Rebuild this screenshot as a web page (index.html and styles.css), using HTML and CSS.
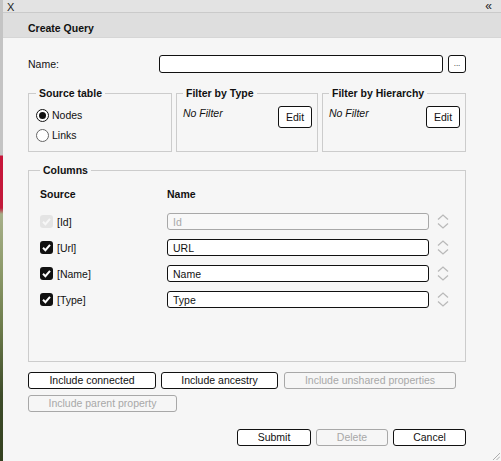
FILE: index.html
```html
<!DOCTYPE html>
<html>
<head>
<meta charset="utf-8">
<link rel="stylesheet" href="styles.css">
</head>
<body>
<div class="backdrop"></div>
<div class="panel">
  <div class="topbar"><span class="close">X</span><span class="collapse">«</span></div>
  <div class="header">Create Query</div>
  <div class="content">
    <div class="name-row">
      <label class="name-label">Name:</label>
      <input class="name-input" type="text">
      <button class="btn btn-dots">...</button>
    </div>
    <div class="filters">
      <fieldset class="box box-source">
        <legend>Source table</legend>
        <div class="radio-row"><span class="radio radio-on"></span><span>Nodes</span></div>
        <div class="radio-row"><span class="radio"></span><span>Links</span></div>
      </fieldset>
      <fieldset class="box box-filter box-type">
        <legend>Filter by Type</legend>
        <div class="filter-row"><span class="nofilter">No Filter</span><button class="btn btn-edit">Edit</button></div>
      </fieldset>
      <fieldset class="box box-filter box-hier">
        <legend>Filter by Hierarchy</legend>
        <div class="filter-row"><span class="nofilter">No Filter</span><button class="btn btn-edit">Edit</button></div>
      </fieldset>
    </div>
    <fieldset class="box box-columns">
      <legend>Columns</legend>
      <div class="col-grid">
        <div class="col-head">Source</div>
        <div class="col-head">Name</div>
        <div></div>

        <div class="src"><span class="check check-disabled"><svg viewBox="0 0 13 13" width="13" height="13"><path d="M3 6.8 L5.4 9.2 L10 3.8" fill="none" stroke="#f7f7f7" stroke-width="2"/></svg></span><span>[Id]</span></div>
        <input class="col-input col-input-disabled" type="text" value="Id" disabled>
        <span class="spin"><svg viewBox="0 0 16 17" width="16" height="17"><path d="M3 6.5 L8 2 L13 6.5 M3 10.5 L8 15 L13 10.5" fill="none" stroke="#b9b9b9" stroke-width="1.3"/></svg></span>

        <div class="src"><span class="check"><svg viewBox="0 0 13 13" width="13" height="13"><path d="M3 6.8 L5.4 9.2 L10 3.8" fill="none" stroke="#fff" stroke-width="2"/></svg></span><span>[Url]</span></div>
        <input class="col-input" type="text" value="URL">
        <span class="spin"><svg viewBox="0 0 16 17" width="16" height="17"><path d="M3 6.5 L8 2 L13 6.5 M3 10.5 L8 15 L13 10.5" fill="none" stroke="#b9b9b9" stroke-width="1.3"/></svg></span>

        <div class="src"><span class="check"><svg viewBox="0 0 13 13" width="13" height="13"><path d="M3 6.8 L5.4 9.2 L10 3.8" fill="none" stroke="#fff" stroke-width="2"/></svg></span><span>[Name]</span></div>
        <input class="col-input" type="text" value="Name">
        <span class="spin"><svg viewBox="0 0 16 17" width="16" height="17"><path d="M3 6.5 L8 2 L13 6.5 M3 10.5 L8 15 L13 10.5" fill="none" stroke="#b9b9b9" stroke-width="1.3"/></svg></span>

        <div class="src"><span class="check"><svg viewBox="0 0 13 13" width="13" height="13"><path d="M3 6.8 L5.4 9.2 L10 3.8" fill="none" stroke="#fff" stroke-width="2"/></svg></span><span>[Type]</span></div>
        <input class="col-input" type="text" value="Type">
        <span class="spin"><svg viewBox="0 0 16 17" width="16" height="17"><path d="M3 6.5 L8 2 L13 6.5 M3 10.5 L8 15 L13 10.5" fill="none" stroke="#b9b9b9" stroke-width="1.3"/></svg></span>
      </div>
    </fieldset>
    <div class="include-row">
      <button class="btn w-connected">Include connected</button>
      <button class="btn w-ancestry">Include ancestry</button>
      <button class="btn btn-disabled w-unshared">Include unshared properties</button>
    </div>
    <div class="include-row row2">
      <button class="btn btn-disabled w-parent">Include parent property</button>
    </div>
    <div class="actions">
      <button class="btn w-submit">Submit</button>
      <button class="btn btn-disabled w-delete">Delete</button>
      <button class="btn w-cancel">Cancel</button>
    </div>
  </div>
  <svg class="grip" viewBox="0 0 8 8" width="8" height="8"><path d="M1 8 L8 1 M4.5 8 L8 4.5" stroke="#9a9a9a" stroke-width="0.8"/></svg>
</div>
</body>
</html>
```
FILE: styles.css
```css
* { box-sizing: border-box; }
html, body { margin: 0; padding: 0; }
body {
  width: 501px;
  height: 461px;
  display: flex;
  overflow: hidden;
  font-family: "Liberation Sans", Arial, sans-serif;
  font-size: 10.5px;
  color: #111;
  background: #f6f6f6;
}
.backdrop {
  width: 3px;
  flex: none;
  background: linear-gradient(to bottom, #c4c4c4 0, #c4c4c4 155px, #c8163a 156px, #c21a3a 208px, #a7b08a 214px, #8d9a6a 270px, #6b7a4a 330px, #3e4c2a 395px, #33401f 461px);
}
.panel {
  flex: 1;
  min-width: 0;
  display: flex;
  flex-direction: column;
  background: #f6f6f6;
  position: relative;
}
.topbar {
  height: 13px;
  flex: none;
  background: #e3e3e3;
  border-bottom: 1px solid #cacaca;
  display: flex;
  justify-content: space-between;
  align-items: flex-start;
  padding: 1px 9px 0 4px;
  line-height: 11px;
  color: #222;
}
.close { font-size: 11px; padding-top: 1px; }
.collapse { font-size: 12px; }
.header {
  height: 25px;
  flex: none;
  background: #dedede;
  border-bottom: 1px solid #d6d6d6;
  padding: 0 0 3px 25px;
  display: flex;
  align-items: flex-end;
  font-weight: bold;
  font-size: 10.5px;
  line-height: 12px;
}
.content {
  padding: 17px 35px 0 25px;
  display: flex;
  flex-direction: column;
  min-width: 0;
}
.name-row {
  display: flex;
  align-items: center;
  height: 18px;
}
.name-label { width: 131px; flex: none; }
.name-input {
  width: 284px;
  height: 18px;
  border: 1px solid #111;
  border-radius: 3px;
  background: #fff;
  margin: 0;
  padding: 0 5px;
}
.btn {
  font-family: inherit;
  font-size: 10.5px;
  color: #111;
  background: #fff;
  border: 1px solid #111;
  border-radius: 3px;
  height: 17px;
  padding: 0;
  margin: 0;
  line-height: 15px;
  text-align: center;
  flex: none;
}
.btn-disabled {
  color: #a8a8a8;
  border-color: #a8a8a8;
  background: #f6f6f6;
}
.btn-dots {
  width: 18px;
  height: 18px;
  margin-left: 5px;
  font-size: 8px;
  line-height: 12px;
}
.filters {
  display: flex;
  gap: 4px;
  margin-top: 14px;
}
.box {
  margin: 0;
  border: 1px solid #cccccc;
  padding: 0 7px 0 7px;
  min-width: 0;
  min-inline-size: 0;
}
.box legend {
  font-weight: bold;
  padding: 0 3px;
  line-height: 12px;
}
.box-source {
  width: 144px;
  flex: none;
  height: 65px;
  padding-top: 9px;
}
.box-filter {
  flex: none;
  height: 65px;
  padding: 7px 5px 0 6px;
}
.box-type { width: 142px; }
.box-hier { width: 144px; }
.radio-row {
  display: flex;
  align-items: center;
  gap: 3px;
  height: 14px;
  margin-bottom: 6px;
}
.radio {
  width: 13px;
  height: 13px;
  border: 1px solid #666;
  border-radius: 50%;
  background: #fff;
  display: flex;
  align-items: center;
  justify-content: center;
}
.radio-on { border-color: #111; }
.radio-on::after {
  content: "";
  width: 7px;
  height: 7px;
  border-radius: 50%;
  background: #111;
}
.filter-row {
  display: flex;
  justify-content: space-between;
  align-items: flex-start;
}
.nofilter { font-style: italic; padding-top: 1px; }
.btn-edit {
  width: 34px;
  height: 22px;
  line-height: 20px;
}
.box-columns {
  margin-top: 12px;
  width: 438px;
  height: 198px;
  padding: 12px 11px 0 11px;
}
.col-grid {
  display: grid;
  grid-template-columns: 121px 262px 16px;
  column-gap: 6px;
  row-gap: 9px;
  align-items: center;
}
.col-head {
  font-weight: bold;
  line-height: 12px;
  margin-bottom: 4px;
}
.src {
  display: flex;
  align-items: center;
  gap: 4px;
}
.check {
  width: 13px;
  height: 13px;
  border-radius: 3px;
  background: #111;
  display: block;
}
.check svg { display: block; }
.check-disabled { background: #e4e4e4; }
.col-input {
  height: 17px;
  width: 262px;
  border: 1px solid #111;
  border-radius: 3px;
  background: #fff;
  margin: 0;
  padding: 0 5px;
  font-family: inherit;
  font-size: 10.5px;
  color: #111;
}
.col-input-disabled {
  border-color: #a8a8a8;
  background: #f8f8f8;
  color: #a8a8a8;
}
.spin { display: block; height: 17px; }
.spin svg { display: block; }
.include-row {
  display: flex;
  gap: 5px;
  margin-top: 10px;
}
.row2 { margin-top: 6px; }
.w-connected { width: 128px; }
.w-ancestry { width: 117px; }
.w-unshared { width: 172px; margin-left: 1px; }
.w-parent { width: 149px; }
.actions {
  display: flex;
  justify-content: flex-end;
  gap: 5px;
  margin-top: 17px;
}
.w-submit { width: 74px; }
.w-delete { width: 72px; }
.w-cancel { width: 73px; }
.grip {
  position: absolute;
  right: 1px;
  bottom: 1px;
}
```
